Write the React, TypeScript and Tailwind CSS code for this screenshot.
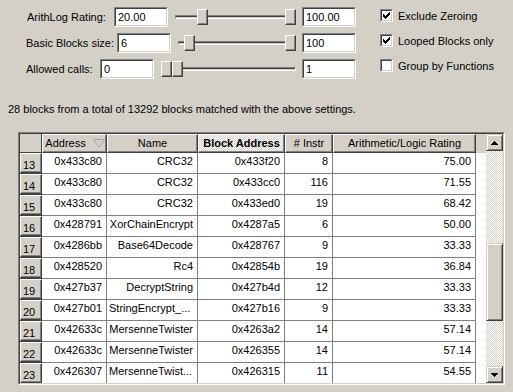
import React from "react";

const raised =
  "border border-t-white border-l-white border-r-[#404040] border-b-[#404040] shadow-[inset_-1px_-1px_0_#808080]";
const sbBtn =
  "border border-t-[#d4d0c8] border-l-[#d4d0c8] border-r-[#404040] border-b-[#404040] shadow-[inset_1px_1px_0_#ffffff,inset_-1px_-1px_0_#808080] bg-[#d4d0c8]";
const checker =
  "bg-[repeating-conic-gradient(#d4d0c8_0%_25%,#ffffff_0%_50%)] bg-[length:2px_2px]";

function TextBox({ value }: { value: string }) {
  return (
    <div className="w-[54px] h-[20px] border border-t-[#808080] border-l-[#808080] border-b-white border-r-white shrink-0">
      <div className="w-full h-full border border-t-[#404040] border-l-[#404040] border-b-[#d4d0c8] border-r-[#d4d0c8] bg-white pl-[2px] leading-[17px]">
        {value}
      </div>
    </div>
  );
}

function Slider({ thumbs }: { thumbs: number[] }) {
  return (
    <div className="relative flex-1 h-[20px] flex items-center ml-[7px] mr-[6px]">
      <div className="w-full h-[4px] border border-t-[#808080] border-l-[#808080] border-b-white border-r-white">
        <div className="h-[1px] bg-[#404040]" />
      </div>
      {thumbs.map((l, i) => (
        <div
          key={i}
          className={`absolute top-[2px] w-[11px] h-[16px] bg-[#d4d0c8] ${raised}`}
          style={l >= 0 ? { left: l } : { right: -l - 1 }}
        />
      ))}
    </div>
  );
}

function Check({ checked }: { checked: boolean }) {
  const px = [
    [6, 0],
    [5, 1], [6, 1],
    [0, 2], [4, 2], [5, 2], [6, 2],
    [0, 3], [1, 3], [3, 3], [4, 3], [5, 3],
    [0, 4], [1, 4], [2, 4], [3, 4], [4, 4],
    [1, 5], [2, 5], [3, 5],
    [2, 6],
  ];
  return (
    <div className="w-[13px] h-[13px] border border-t-[#808080] border-l-[#808080] border-b-white border-r-white shrink-0">
      <div className="w-full h-full border border-t-[#404040] border-l-[#404040] border-b-[#d4d0c8] border-r-[#d4d0c8] bg-white relative">
        {checked && (
          <svg width="7" height="7" className="absolute left-[1px] top-[1px]" shapeRendering="crispEdges">
            {px.map(([x, y], i) => (
              <rect key={i} x={x} y={y} width="1" height="1" fill="#000" />
            ))}
          </svg>
        )}
      </div>
    </div>
  );
}

const rows: [string, string, string, string, string, string, boolean?][] = [
  ["13", "0x433c80", "CRC32", "0x433f20", "8", "75.00"],
  ["14", "0x433c80", "CRC32", "0x433cc0", "116", "71.55"],
  ["15", "0x433c80", "CRC32", "0x433ed0", "19", "68.42"],
  ["16", "0x428791", "XorChainEncrypt", "0x4287a5", "6", "50.00"],
  ["17", "0x4286bb", "Base64Decode", "0x428767", "9", "33.33"],
  ["18", "0x428520", "Rc4", "0x42854b", "19", "36.84"],
  ["19", "0x427b37", "DecryptString", "0x427b4d", "12", "33.33"],
  ["20", "0x427b01", "StringEncrypt_...", "0x427b16", "9", "33.33", true],
  ["21", "0x42633c", "MersenneTwister", "0x4263a2", "14", "57.14"],
  ["22", "0x42633c", "MersenneTwister", "0x426355", "14", "57.14"],
  ["23", "0x426307", "MersenneTwist...", "0x426315", "11", "54.55", true],
];

const cell = "h-full bg-white border-r border-b border-[#808080] pt-[2px] leading-[13px] overflow-hidden whitespace-nowrap";

export default function App() {
  return (
    <div className="w-[513px] h-[392px] bg-[#d4d0c8] font-['Liberation_Sans',Arial,sans-serif] text-[11px] text-black overflow-hidden">
      <div className="flex pt-[7px]">
        <div className="flex flex-col gap-[6px] pl-[26px] w-[356px]">
          <div className="flex items-center h-[20px]">
            <div className="w-[88px] pl-[1px]">ArithLog Rating:</div>
            <TextBox value="20.00" />
            <Slider thumbs={[22, -1]} />
            <TextBox value="100.00" />
          </div>
          <div className="flex items-center h-[20px]">
            <div className="w-[91px]">Basic Blocks size:</div>
            <TextBox value="6" />
            <Slider thumbs={[6, -1]} />
            <TextBox value="100" />
          </div>
          <div className="flex items-center h-[20px]">
            <div className="w-[74px]">Allowed calls:</div>
            <TextBox value="0" />
            <Slider thumbs={[0, 11]} />
            <TextBox value="1" />
          </div>
        </div>
        <div className="flex flex-col gap-[11px] ml-[24px] pt-[1px]">
          <div className="flex items-center h-[14px] gap-[5px]">
            <Check checked />
            <span className="pt-[2px]">Exclude Zeroing</span>
          </div>
          <div className="flex items-center h-[14px] gap-[5px]">
            <Check checked />
            <span className="pt-[2px]">Looped Blocks only</span>
          </div>
          <div className="flex items-center h-[14px] gap-[5px]">
            <Check checked={false} />
            <span className="pt-[2px]">Group by Functions</span>
          </div>
        </div>
      </div>

      <div className="mt-[24px] pl-[8px] leading-[13px]">
        28 blocks from a total of 13292 blocks matched with the above settings.
      </div>

      <div className="ml-[18px] mt-[16px] w-[487px] h-[253px] border border-t-[#808080] border-l-[#808080] border-b-white border-r-white">
        <div className="w-full h-full border border-t-[#404040] border-l-[#404040] border-b-[#d4d0c8] border-r-[#d4d0c8] flex overflow-hidden">
          <div className="flex-1 flex flex-col overflow-hidden">
            <div className="flex h-[19px] shrink-0">
              <div className="w-[22px] h-full border-r border-b border-[#404040]" />
              <div className={`w-[65px] h-full ${raised} flex items-center justify-center gap-[7px] pl-[1px]`}>
                <span>Address</span>
                <svg width="12" height="9" viewBox="0 0 12 9">
                  <path d="M0.5 0.5 H11.5 L6 8.5 Z" fill="none" stroke="#a8a8a8" />
                </svg>
              </div>
              <div className={`w-[91px] h-full ${raised} flex items-center justify-center`}>Name</div>
              <div className={`w-[87px] h-full ${raised} ${checker} flex items-center justify-center font-bold`}>
                Block Address
              </div>
              <div className={`w-[48px] h-full ${raised} flex items-center justify-center`}># Instr</div>
              <div className={`w-[143px] h-full ${raised} flex items-center justify-center`}>
                Arithmetic/Logic Rating
              </div>
              <div className="flex-1 h-full" />
            </div>
            {rows.map((r) => (
              <div key={r[0]} className="flex h-[21px] shrink-0">
                <div className="w-[22px] h-full border-b border-[#404040] shrink-0">
                  <div className={`w-full h-full ${raised} bg-[#d4d0c8] pl-[2px] pt-[6px] leading-[11px]`}>{r[0]}</div>
                </div>
                <div className={`w-[65px] ${cell} text-right pr-[4px]`}>{r[1]}</div>
                <div className={`w-[91px] ${cell} ${r[6] ? "text-left pl-[2px]" : "text-right pr-[4px]"}`}>{r[2]}</div>
                <div className={`w-[87px] ${cell} text-right pr-[4px]`}>{r[3]}</div>
                <div className={`w-[48px] ${cell} text-right pr-[4px]`}>{r[4]}</div>
                <div className={`w-[143px] ${cell} text-right pr-[4px]`}>{r[5]}</div>
                <div className="flex-1 h-full bg-white" />
              </div>
            ))}
          </div>
          <div className="w-[17px] h-full flex flex-col shrink-0">
            <div className={`h-[17px] ${sbBtn} flex items-center justify-center shrink-0`}>
              <svg width="7" height="4" viewBox="0 0 7 4" shapeRendering="crispEdges">
                <path d="M3 0 H4 V1 H5 V2 H6 V3 H7 V4 H0 V3 H1 V2 H2 V1 H3 Z" fill="#000" />
              </svg>
            </div>
            <div className={`h-[92px] ${checker} shrink-0`} />
            <div className={`h-[78px] ${sbBtn} shrink-0`} />
            <div className={`flex-1 ${checker}`} />
            <div className={`h-[17px] ${sbBtn} flex items-center justify-center shrink-0`}>
              <svg width="7" height="4" viewBox="0 0 7 4" shapeRendering="crispEdges">
                <path d="M0 0 H7 V1 H6 V2 H5 V3 H4 V4 H3 V3 H2 V2 H1 V1 H0 Z" fill="#000" />
              </svg>
            </div>
          </div>
        </div>
      </div>
    </div>
  );
}
